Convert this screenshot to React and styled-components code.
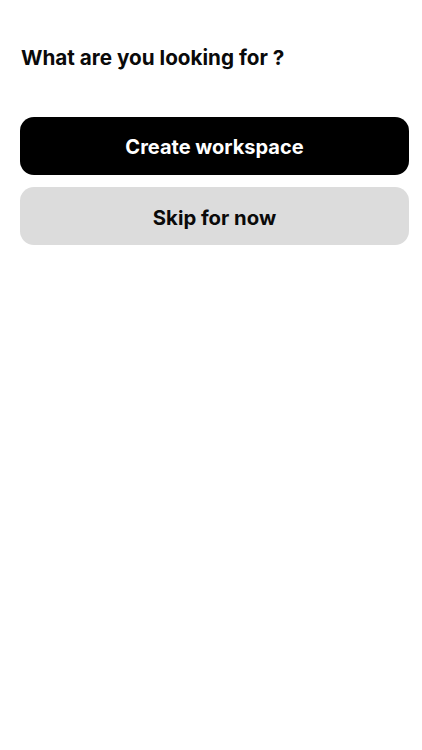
import React from "react";
import styled, { createGlobalStyle } from "styled-components";

const GlobalStyle = createGlobalStyle`
  html, body {
    margin: 0;
    padding: 0;
    background: #ffffff;
  }
  body {
    font-family: Inter, "Liberation Sans", Arial, sans-serif;
    color: #000000;
  }
`;

export default function App() {
    return (
        <>
            <GlobalStyle />
            <Page>
                <Title>What are you looking for ?</Title>
                <Actions>
                    <ActionButton $variant="primary">Create workspace</ActionButton>
                    <ActionButton $variant="secondary">Skip for now</ActionButton>
                </Actions>
            </Page>
        </>
    );
}

const Page = styled.main`
  display: flex;
  flex-direction: column;
  padding: 46px 13px 0 20px;
  min-height: 100vh;
  box-sizing: border-box;
`;

const Title = styled.h1`
  margin: 0 0 0 1px;
  font-size: 20.7px;
  line-height: 24px;
  font-weight: 700;
  color: #0a0a0a;
`;

const Actions = styled.div`
  display: flex;
  flex-direction: column;
  gap: 12px;
  margin-top: 47px;
`;

const ActionButton = styled.button`
  display: flex;
  align-items: center;
  justify-content: center;
  width: 100%;
  height: 58px;
  padding: 2px 0 0;
  border: none;
  border-radius: 14px;
  font-family: inherit;
  font-size: ${({ $variant }) => ($variant === "primary" ? "20px" : "20.3px")};
  font-weight: 700;
  cursor: pointer;
  background: ${({ $variant }) => ($variant === "primary" ? "#000000" : "#dcdcdc")};
  color: ${({ $variant }) => ($variant === "primary" ? "#ffffff" : "#0a0a0a")};
`;
